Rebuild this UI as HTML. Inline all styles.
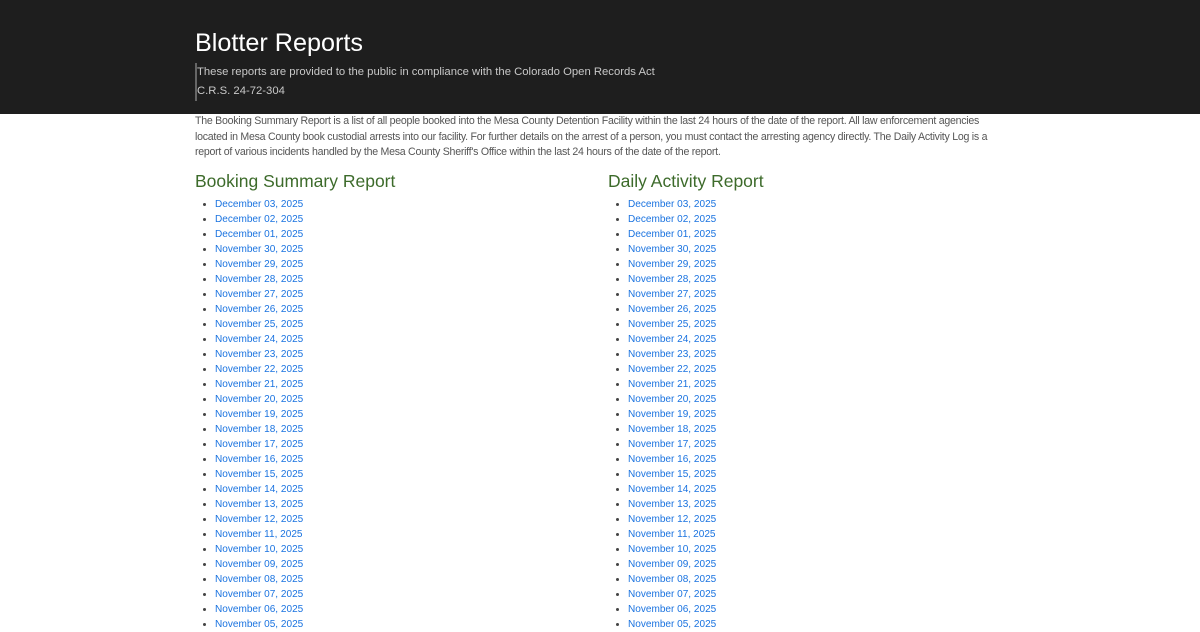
<!DOCTYPE html>
<html><head><meta charset="utf-8"><style>
*{margin:0;padding:0;box-sizing:border-box}
body{width:1200px;height:620px;overflow:hidden;background:#fff;font-family:"Liberation Sans",sans-serif;}
.hdr{background:#1e1e1e;height:114px;position:relative}
h1{position:absolute;left:195px;top:27px;font-size:25.2px;font-weight:normal;color:#fff;line-height:32px}
.sub{position:absolute;left:195px;top:63px;border-left:2px solid #666;padding-left:0;color:#c8c8c8;font-size:11.3px;line-height:19px}
p{position:absolute;left:195px;top:114px;width:810px;font-size:10.6px;letter-spacing:-0.26px;line-height:15.5px;color:#555}
.col{position:absolute;top:170px}
h2{font-size:17.5px;font-weight:normal;color:#3d6b2b;line-height:22px;margin-bottom:5px}
ul{margin-left:20px;font-size:10.05px;line-height:15px;color:#444}
li a{color:#1a73e0;text-decoration:none}
</style></head><body>
<div class="hdr"><h1>Blotter Reports</h1>
<div class="sub">These reports are provided to the public in compliance with the Colorado Open Records Act<br>C.R.S. 24-72-304</div></div>
<p>The Booking Summary Report is a list of all people booked into the Mesa County Detention Facility within the last 24 hours of the date of the report. All law enforcement agencies located in Mesa County book custodial arrests into our facility. For further details on the arrest of a person, you must contact the arresting agency directly. The Daily Activity Log is a report of various incidents handled by the Mesa County Sheriff's Office within the last 24 hours of the date of the report.</p>
<div class="col" style="left:195px"><h2>Booking Summary Report</h2><ul id="a"></ul></div>
<div class="col" style="left:608px"><h2>Daily Activity Report</h2><ul id="b"></ul></div>
<script>
var d=["December 03, 2025","December 02, 2025","December 01, 2025"];
for(var i=30;i>=5;i--)d.push("November "+(i<10?"0":"")+i+", 2025");
var h=d.map(function(x){return '<li><a href="#">'+x+'</a></li>'}).join('');
document.getElementById('a').innerHTML=h;document.getElementById('b').innerHTML=h;
</script>
</body></html>
